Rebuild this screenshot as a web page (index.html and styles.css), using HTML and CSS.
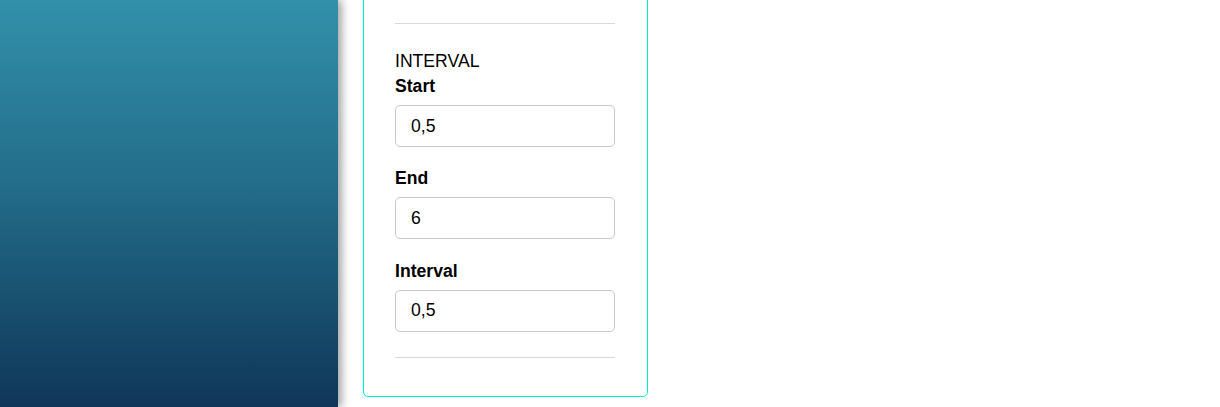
FILE: index.html
```html
<!DOCTYPE html>
<html>
<head>
<meta charset="utf-8">
<link rel="stylesheet" href="styles.css">
</head>
<body>
<div class="layout">
  <aside class="sidebar"></aside>
  <main class="main">
    <section class="card">
      <hr class="divider">
      <div class="section-title">INTERVAL</div>
      <div class="field">
        <label class="label">Start</label>
        <input class="input" type="text" value="0,5">
      </div>
      <div class="field">
        <label class="label">End</label>
        <input class="input" type="text" value="6">
      </div>
      <div class="field">
        <label class="label">Interval</label>
        <input class="input" type="text" value="0,5">
      </div>
      <hr class="divider bottom">
    </section>
  </main>
</div>
</body>
</html>
```
FILE: styles.css
```css
* { box-sizing: border-box; }
html, body { margin: 0; padding: 0; background: #fff; }
body {
  font-family: "Liberation Sans", Arial, sans-serif;
  font-size: 17.6px;
  color: #000;
  height: 407px;
  overflow: hidden;
}
.layout {
  display: flex;
  height: 407px;
}
.sidebar {
  width: 338px;
  flex: none;
  background: linear-gradient(to bottom, #3290aa 0%, #236d8a 45%, #0f3658 100%);
  box-shadow: 4px 0 8px rgba(0, 0, 0, 0.35);
  position: relative;
  z-index: 1;
}
.main {
  flex: 1;
  padding-left: 25px;
}
.card {
  width: 285px;
  margin-top: -41px;
  border: 1px solid #00f0d0;
  border-radius: 5px;
  padding: 63px 32px 38px 31px;
}
.divider {
  border: none;
  border-top: 1px solid #d9d9d9;
  margin: 0;
}
.section-title {
  margin-top: 25px;
  margin-bottom: 1px;
  line-height: 24px;
}
.field {
  margin-bottom: 19.4px;
}
.label {
  display: block;
  font-weight: bold;
  line-height: 24px;
  margin-bottom: 7px;
}
.input {
  display: block;
  width: 220px;
  height: 42px;
  border: 1px solid #c8c8c8;
  border-radius: 5px;
  padding: 0 15px;
  font-family: "Liberation Sans", Arial, sans-serif;
  font-size: 17.6px;
  color: #000;
  outline: none;
}
.divider.bottom {
  margin-top: 25px;
}
```
